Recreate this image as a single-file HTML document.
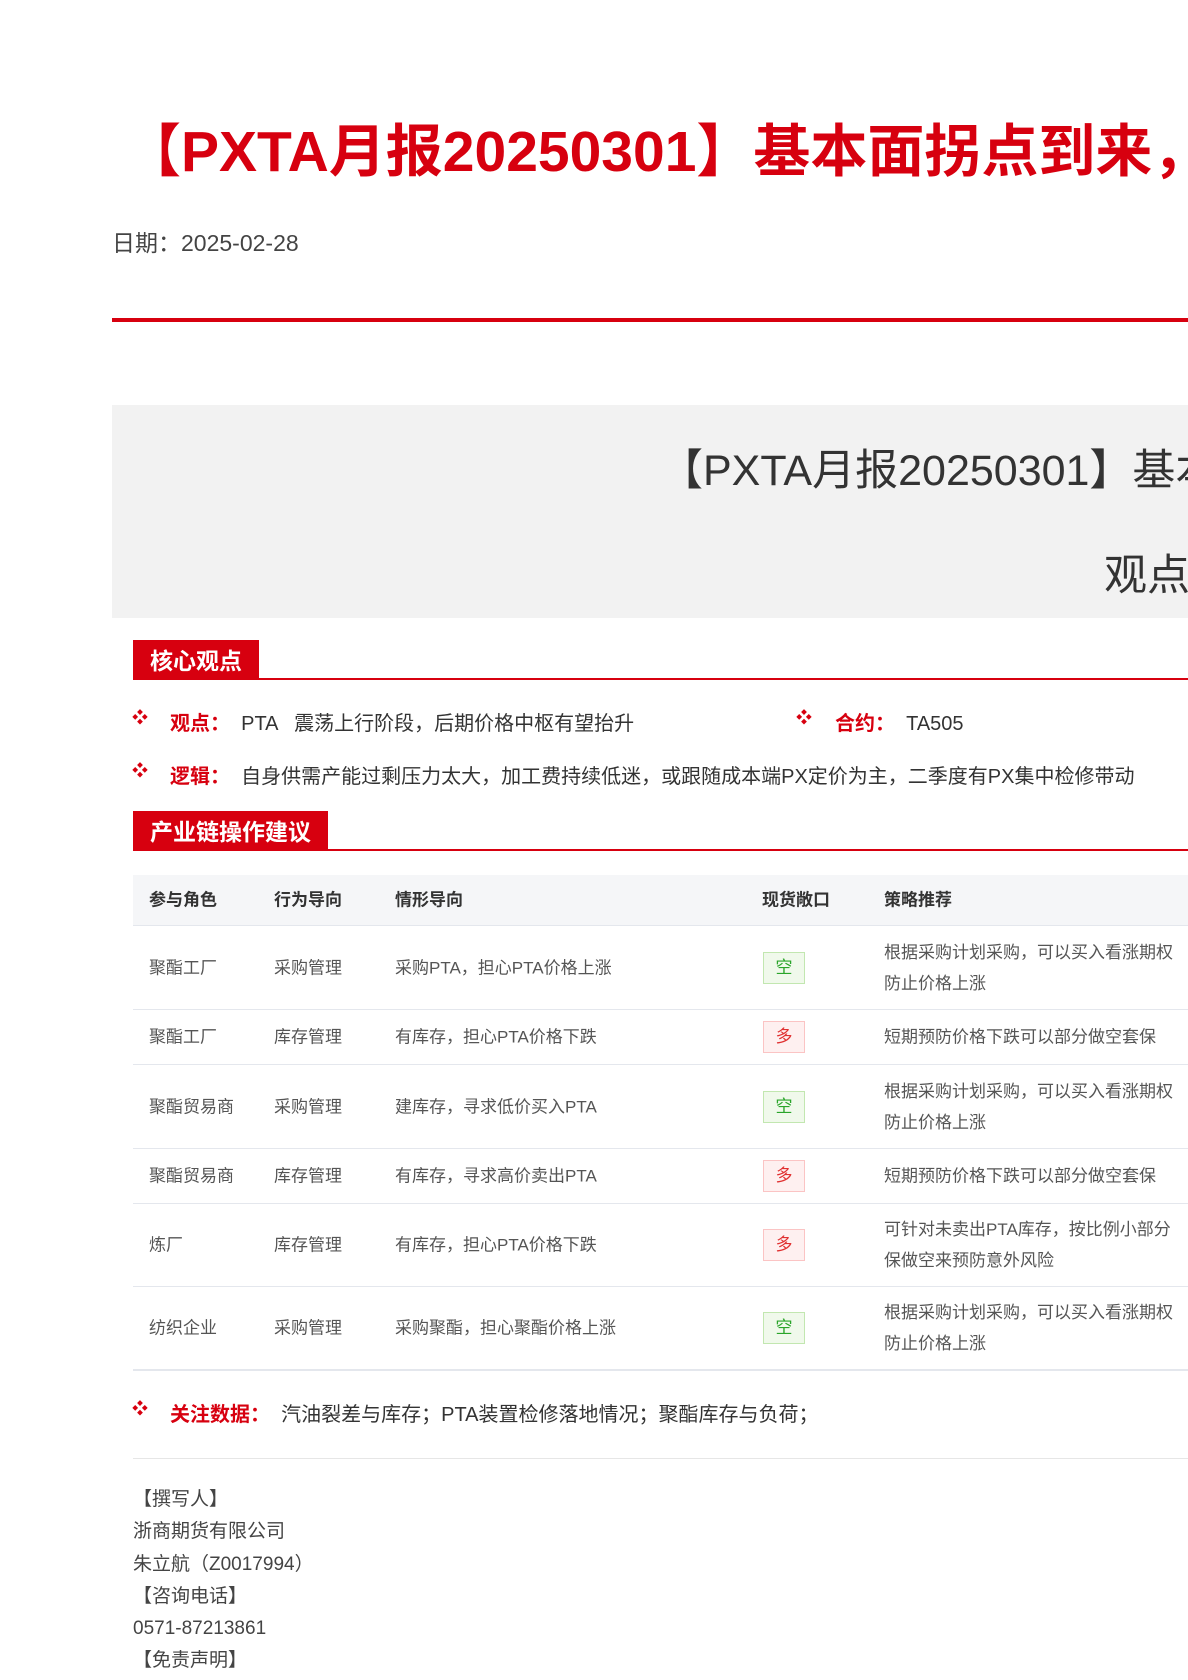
<!DOCTYPE html><html><head><meta charset="utf-8"><style>
*{margin:0;padding:0;box-sizing:border-box}
html,body{width:1188px;height:1680px;overflow:hidden}
body{background:#fff;font-family:"Liberation Sans","Noto Sans CJK SC",sans-serif;color:#333;position:relative}
#w{position:absolute;left:0;top:0;width:1188px;height:1680px;overflow:hidden}
.a{position:absolute;white-space:nowrap}
.red{color:#d7000f}
.tab{position:absolute;left:133px;background:#d7000f;color:#fff;font-size:23px;font-weight:bold;padding:0 17px;height:40px;line-height:42px}
.hl{position:absolute;left:133px;right:0;height:2px;background:#d7000f}
.dia{position:absolute;width:16px;height:16px;color:#d7000f;font-size:16px;line-height:16px;font-weight:bold}
.row{position:absolute;left:133px;right:0;border-bottom:1px solid #e4e7ed;font-size:17px;color:#555}
.row span{position:absolute;top:50%;transform:translateY(-50%);white-space:nowrap;line-height:31px}
.tag{display:inline-block;width:42px;height:32px;line-height:30px;text-align:center;font-size:17px;border:1px solid;font-style:normal}
.k{border-color:#c2e7b0;background:#f0f9eb;color:#2aa52a}
.d{border-color:#fbc4c4;background:#fef0f0;color:#e03030}
</style></head><body><div id="w">
<div class="a red" style="left:124px;top:114px;font-size:57px;font-weight:bold;line-height:76px">【PXTA月报20250301】基本面拐点到来，</div>
<div class="a" style="left:112px;top:224px;font-size:23px;color:#444">日期：2025-02-28</div>
<div class="a" style="left:112px;top:318px;right:0;height:4px;background:#d7000f"></div>
<div class="a" style="left:112px;top:405px;right:0;height:213px;background:#f2f2f2"></div>
<div class="a" style="left:660px;top:436px;font-size:43px;color:#333">【PXTA月报20250301】基本</div>
<div class="a" style="left:1104px;top:541px;font-size:43px;color:#333">观点</div>
<div class="tab" style="top:640px">核心观点</div><div class="hl" style="top:678px"></div>
<div class="dia" style="left:132px;top:711px">❖</div>
<div class="a" style="left:170px;top:707px;font-size:20px"><b class="red">观点：</b>&nbsp; PTA &nbsp;&nbsp;震荡上行阶段，后期价格中枢有望抬升</div>
<div class="dia" style="left:796px;top:711px">❖</div>
<div class="a" style="left:835px;top:707px;font-size:20px"><b class="red">合约：</b>&nbsp; TA505</div>
<div class="dia" style="left:132px;top:764px">❖</div>
<div class="a" style="left:170px;top:760px;font-size:20px"><b class="red">逻辑：</b>&nbsp; 自身供需产能过剩压力太大，加工费持续低迷，或跟随成本端PX定价为主，二季度有PX集中检修带动</div>
<div class="tab" style="top:811px">产业链操作建议</div><div class="hl" style="top:849px"></div>
<div class="row" style="top:875px;height:51px;background:#f5f6f8;font-weight:bold;color:#333">
<span style="left:16px">参与角色</span><span style="left:141px">行为导向</span><span style="left:262px">情形导向</span><span style="left:629px">现货敞口</span><span style="left:751px">策略推荐</span></div>
<div class="row" style="top:926px;height:84px"><span style="left:16px">聚酯工厂</span><span style="left:141px">采购管理</span><span style="left:262px">采购PTA，担心PTA价格上涨</span><span style="left:630px"><i class="tag k">空</i></span><span style="left:751px">根据采购计划采购，可以买入看涨期权<br>防止价格上涨</span></div>
<div class="row" style="top:1010px;height:55px"><span style="left:16px">聚酯工厂</span><span style="left:141px">库存管理</span><span style="left:262px">有库存，担心PTA价格下跌</span><span style="left:630px"><i class="tag d">多</i></span><span style="left:751px">短期预防价格下跌可以部分做空套保</span></div>
<div class="row" style="top:1065px;height:84px"><span style="left:16px">聚酯贸易商</span><span style="left:141px">采购管理</span><span style="left:262px">建库存，寻求低价买入PTA</span><span style="left:630px"><i class="tag k">空</i></span><span style="left:751px">根据采购计划采购，可以买入看涨期权<br>防止价格上涨</span></div>
<div class="row" style="top:1149px;height:55px"><span style="left:16px">聚酯贸易商</span><span style="left:141px">库存管理</span><span style="left:262px">有库存，寻求高价卖出PTA</span><span style="left:630px"><i class="tag d">多</i></span><span style="left:751px">短期预防价格下跌可以部分做空套保</span></div>
<div class="row" style="top:1204px;height:83px"><span style="left:16px">炼厂</span><span style="left:141px">库存管理</span><span style="left:262px">有库存，担心PTA价格下跌</span><span style="left:630px"><i class="tag d">多</i></span><span style="left:751px">可针对未卖出PTA库存，按比例小部分<br>保做空来预防意外风险</span></div>
<div class="row" style="top:1287px;height:84px;border-bottom:2px solid #e4e7ed"><span style="left:16px">纺织企业</span><span style="left:141px">采购管理</span><span style="left:262px">采购聚酯，担心聚酯价格上涨</span><span style="left:630px"><i class="tag k">空</i></span><span style="left:751px">根据采购计划采购，可以买入看涨期权<br>防止价格上涨</span></div>
<div class="dia" style="left:132px;top:1402px">❖</div>
<div class="a" style="left:170px;top:1398px;font-size:20px"><b class="red">关注数据：</b>&nbsp; 汽油裂差与库存；PTA装置检修落地情况；聚酯库存与负荷；</div>
<div class="a" style="left:133px;top:1458px;right:0;height:1px;background:#e6e6e6"></div>
<div class="a" style="left:133px;top:1484px;font-size:19px;line-height:32.3px;color:#444">【撰写人】<br>浙商期货有限公司<br>朱立航（Z0017994）<br>【咨询电话】<br>0571-87213861<br>【免责声明】</div>
</div></body></html>
